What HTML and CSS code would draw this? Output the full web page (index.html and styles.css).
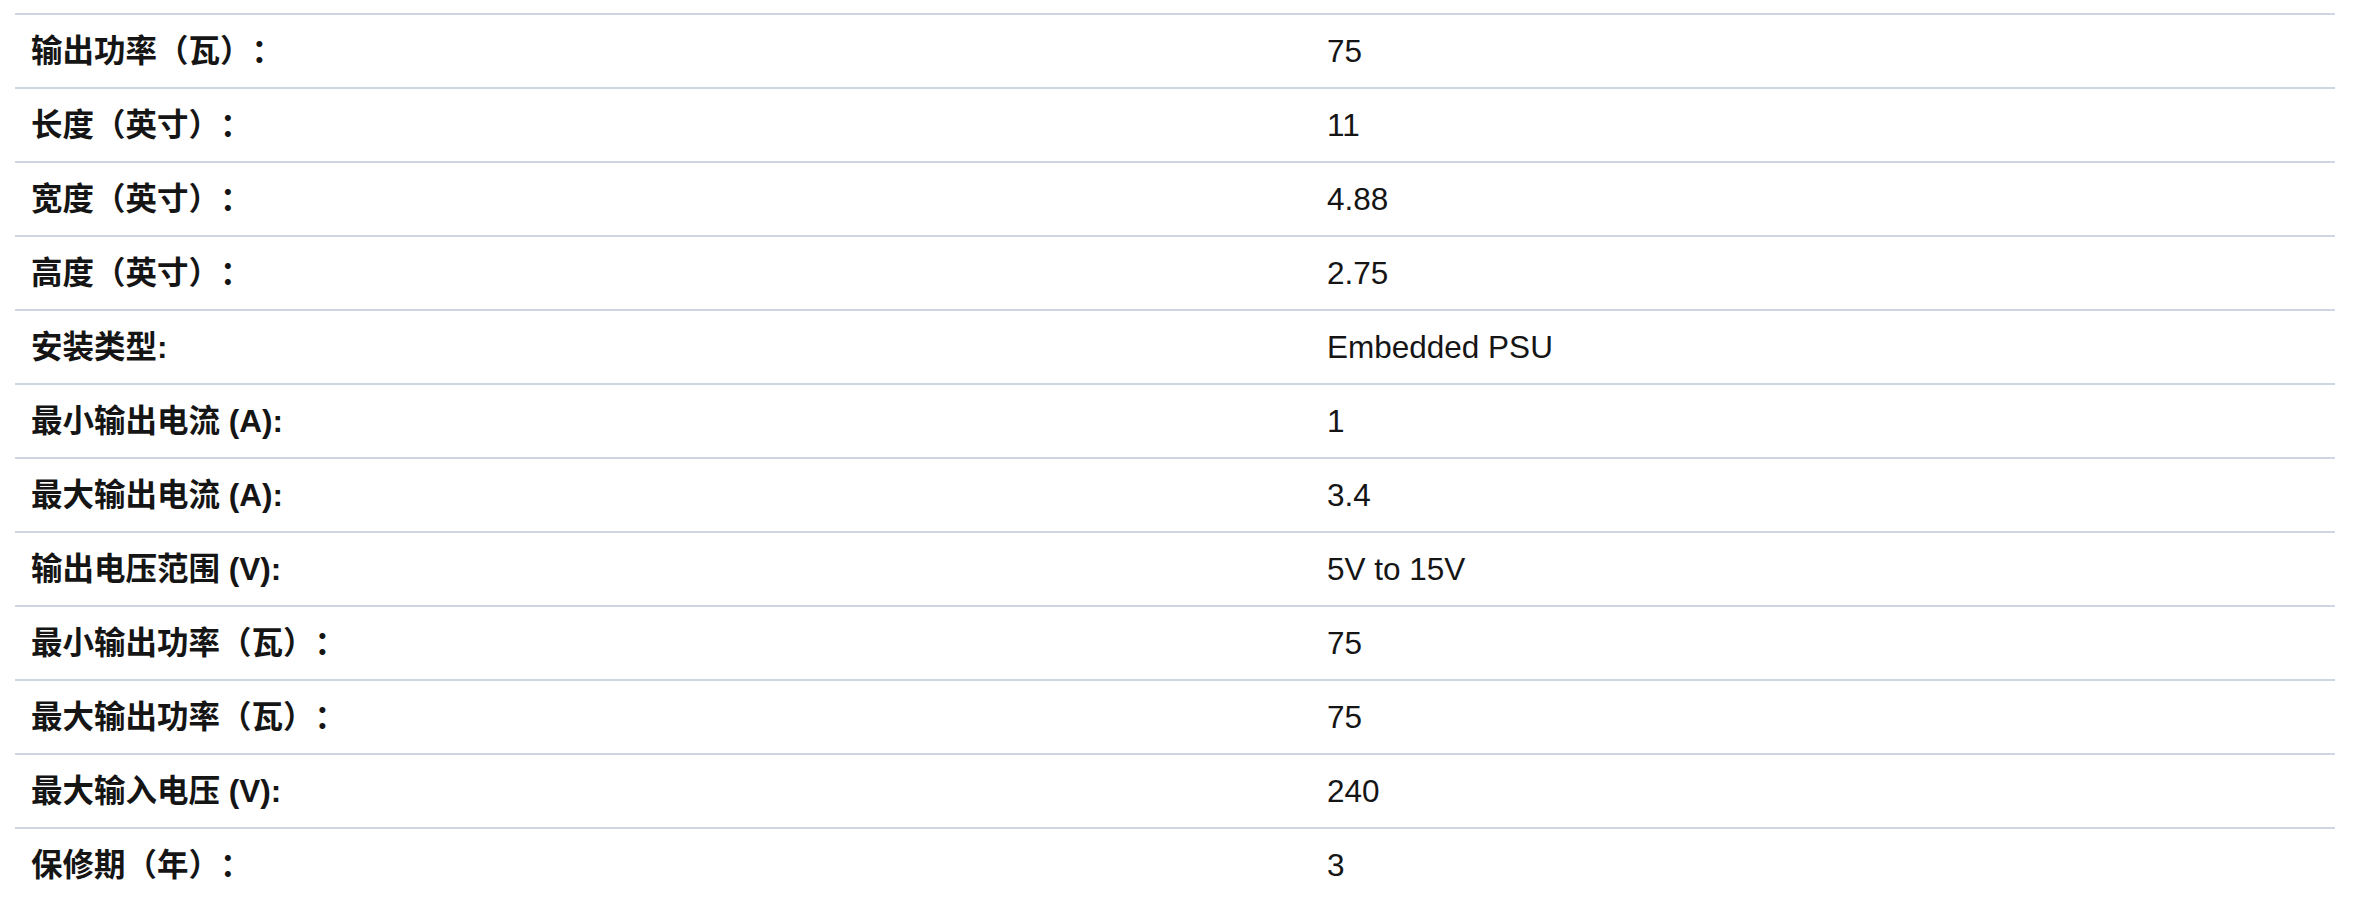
FILE: index.html
```html
<!DOCTYPE html>
<html lang="zh-CN">
<head>
<meta charset="utf-8">
<title>规格</title>
<link rel="stylesheet" href="styles.css">
</head>
<body>
<div class="specs">
  <div class="row"><div class="label">输出功率（瓦）：</div><div class="value">75</div></div>
  <div class="row"><div class="label">长度（英寸）：</div><div class="value">11</div></div>
  <div class="row"><div class="label">宽度（英寸）：</div><div class="value">4.88</div></div>
  <div class="row"><div class="label">高度（英寸）：</div><div class="value">2.75</div></div>
  <div class="row"><div class="label">安装类型:</div><div class="value">Embedded PSU</div></div>
  <div class="row"><div class="label">最小输出电流 (A):</div><div class="value">1</div></div>
  <div class="row"><div class="label">最大输出电流 (A):</div><div class="value">3.4</div></div>
  <div class="row"><div class="label">输出电压范围 (V):</div><div class="value">5V to 15V</div></div>
  <div class="row"><div class="label">最小输出功率（瓦）：</div><div class="value">75</div></div>
  <div class="row"><div class="label">最大输出功率（瓦）：</div><div class="value">75</div></div>
  <div class="row"><div class="label">最大输入电压 (V):</div><div class="value">240</div></div>
  <div class="row"><div class="label">保修期（年）：</div><div class="value">3</div></div>
</div>
</body>
</html>
```
FILE: styles.css
```css
html, body {
  margin: 0;
  padding: 0;
  background: #ffffff;
}
body {
  font-family: "Liberation Sans", "Noto Sans CJK SC", sans-serif;
  font-size: 31.5px;
  line-height: 36px;
  color: #151515;
  overflow: hidden;
  text-spacing-trim: space-all;
}
.specs {
  width: 2320px;
  margin: 13px 0 0 15px;
}
.row {
  display: grid;
  grid-template-columns: 1297px 1fr;
  align-items: center;
  height: 74px;
  box-sizing: border-box;
  border-top: 2px solid #cdd6e1;
}
.label {
  padding-left: 16px;
  font-weight: 700;
  white-space: nowrap;
  text-spacing-trim: space-all;
}
.value {
  padding-left: 15px;
  white-space: nowrap;
}
```
